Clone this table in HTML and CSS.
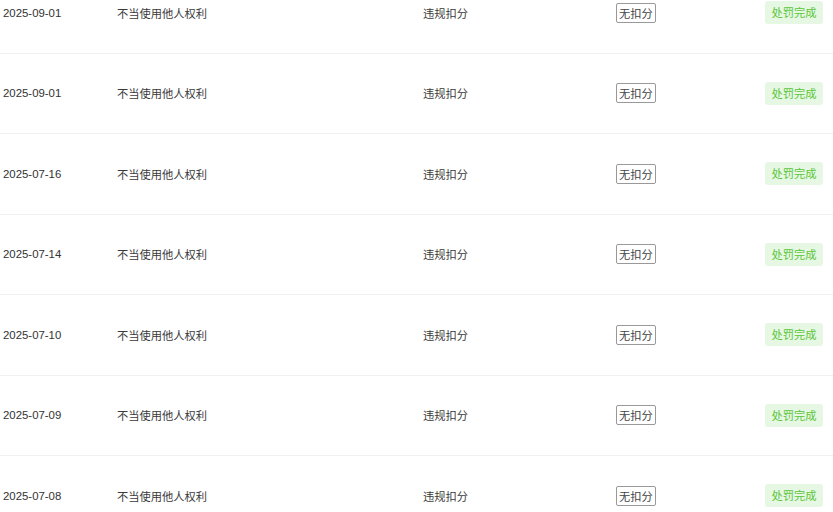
FILE: index.html
```html
<!DOCTYPE html>
<html lang="zh">
<head>
<meta charset="utf-8">
<link rel="stylesheet" href="styles.css">
</head>
<body>
<div class="table">
  <div class="row"><span class="date">2025-09-01</span><span class="reason">不当使用他人权利</span><span class="type">违规扣分</span><span class="score"><span class="tag">无扣分</span></span><span class="status"><span class="done">处罚完成</span></span></div>
  <div class="row"><span class="date">2025-09-01</span><span class="reason">不当使用他人权利</span><span class="type">违规扣分</span><span class="score"><span class="tag">无扣分</span></span><span class="status"><span class="done">处罚完成</span></span></div>
  <div class="row"><span class="date">2025-07-16</span><span class="reason">不当使用他人权利</span><span class="type">违规扣分</span><span class="score"><span class="tag">无扣分</span></span><span class="status"><span class="done">处罚完成</span></span></div>
  <div class="row"><span class="date">2025-07-14</span><span class="reason">不当使用他人权利</span><span class="type">违规扣分</span><span class="score"><span class="tag">无扣分</span></span><span class="status"><span class="done">处罚完成</span></span></div>
  <div class="row"><span class="date">2025-07-10</span><span class="reason">不当使用他人权利</span><span class="type">违规扣分</span><span class="score"><span class="tag">无扣分</span></span><span class="status"><span class="done">处罚完成</span></span></div>
  <div class="row"><span class="date">2025-07-09</span><span class="reason">不当使用他人权利</span><span class="type">违规扣分</span><span class="score"><span class="tag">无扣分</span></span><span class="status"><span class="done">处罚完成</span></span></div>
  <div class="row"><span class="date">2025-07-08</span><span class="reason">不当使用他人权利</span><span class="type">违规扣分</span><span class="score"><span class="tag">无扣分</span></span><span class="status"><span class="done">处罚完成</span></span></div>
</div>
</body>
</html>
```
FILE: styles.css
```css
html, body {
  margin: 0;
  padding: 0;
  background: #fff;
  overflow: hidden;
}
body {
  font-family: "Liberation Sans", "Noto Sans CJK SC", sans-serif;
  font-size: 11.4px;
  color: #333;
}
.table {
  margin-top: -27px;
}
.row {
  display: grid;
  grid-template-columns: 114px 306px 193px 149px 60px;
  align-items: center;
  height: 80.5px;
  box-sizing: border-box;
  padding-left: 3px;
  border-bottom: 1px solid #f0f0f0;
}
.reason, .type {
  font-family: "Noto Sans CJK SC", sans-serif;
  font-size: 11.25px;
  color: #3a3a3a;
}
.tag {
  display: inline-block;
  font-family: "Noto Sans CJK SC", sans-serif;
  font-size: 11.25px;
  border: 1px solid #999;
  border-radius: 2px;
  padding: 0 2px;
  line-height: 18px;
  color: #444;
}
.done {
  display: inline-block;
  font-family: "Noto Sans CJK SC", sans-serif;
  font-size: 11.25px;
  background: #e6f7e4;
  color: #5cc63a;
  border-radius: 3px;
  padding: 0 6.5px;
  line-height: 23px;
}
```
